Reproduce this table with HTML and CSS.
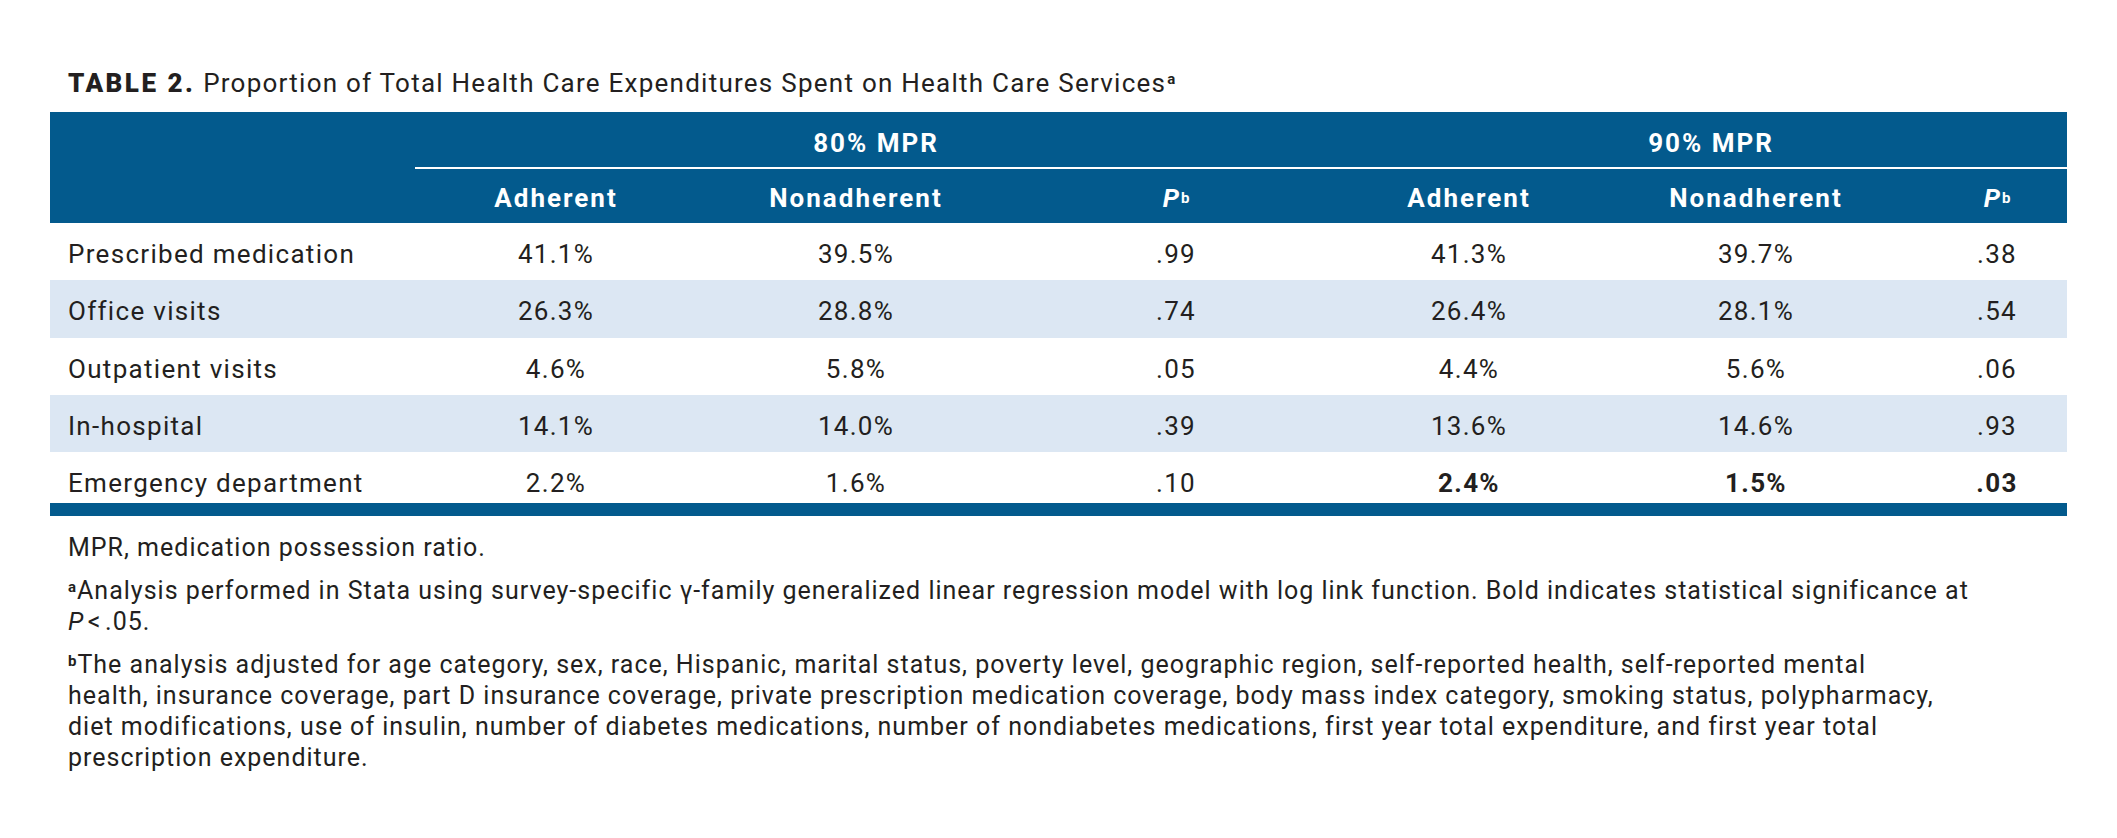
FILE: index.html
```html
<!DOCTYPE html>
<html lang="en">
<head>
<meta charset="utf-8">
<title>Table 2</title>
<link rel="stylesheet" href="styles.css">
</head>
<body>
<div class="page">
  <h1 class="title"><span class="label">TABLE 2.</span> Proportion of Total Health Care Expenditures Spent on Health Care Services<sup class="mark">a</sup></h1>

  <div class="table">
    <div class="head">
      <div class="hrow hrow-top">
        <div class="hcell blank"></div>
        <div class="hcell group g80">80% MPR</div>
        <div class="hcell group g90">90% MPR</div>
      </div>
      <div class="hrow hrow-sub">
        <div class="hcell blank"></div>
        <div class="hcell">Adherent</div>
        <div class="hcell">Nonadherent</div>
        <div class="hcell"><i>P</i><sup class="mark">b</sup></div>
        <div class="hcell">Adherent</div>
        <div class="hcell">Nonadherent</div>
        <div class="hcell last-col"><i>P</i><sup class="mark">b</sup></div>
      </div>
    </div>

    <div class="row">
      <div class="cell name">Prescribed medication</div>
      <div class="cell">41.1%</div>
      <div class="cell">39.5%</div>
      <div class="cell">.99</div>
      <div class="cell">41.3%</div>
      <div class="cell">39.7%</div>
      <div class="cell last-col">.38</div>
    </div>
    <div class="row alt tall">
      <div class="cell name">Office visits</div>
      <div class="cell">26.3%</div>
      <div class="cell">28.8%</div>
      <div class="cell">.74</div>
      <div class="cell">26.4%</div>
      <div class="cell">28.1%</div>
      <div class="cell last-col">.54</div>
    </div>
    <div class="row">
      <div class="cell name">Outpatient visits</div>
      <div class="cell">4.6%</div>
      <div class="cell">5.8%</div>
      <div class="cell">.05</div>
      <div class="cell">4.4%</div>
      <div class="cell">5.6%</div>
      <div class="cell last-col">.06</div>
    </div>
    <div class="row alt">
      <div class="cell name">In-hospital</div>
      <div class="cell">14.1%</div>
      <div class="cell">14.0%</div>
      <div class="cell">.39</div>
      <div class="cell">13.6%</div>
      <div class="cell">14.6%</div>
      <div class="cell last-col">.93</div>
    </div>
    <div class="row row-last">
      <div class="cell name">Emergency department</div>
      <div class="cell">2.2%</div>
      <div class="cell">1.6%</div>
      <div class="cell">.10</div>
      <div class="cell strong">2.4%</div>
      <div class="cell strong">1.5%</div>
      <div class="cell last-col strong">.03</div>
    </div>
    <div class="bottom-rule"></div>
  </div>

  <div class="notes">
    <p class="note">MPR, medication possession ratio.</p>
    <p class="note"><sup class="fn">a</sup>Analysis performed in Stata using survey-specific γ-family generalized linear regression model with log link function. Bold indicates statistical significance at<br><i>P</i>&#8202;&lt;&#8202;.05.</p>
    <p class="note"><sup class="fn">b</sup>The analysis adjusted for age category, sex, race, Hispanic, marital status, poverty level, geographic region, self-reported health, self-reported mental<br>health, insurance coverage, part D insurance coverage, private prescription medication coverage, body mass index category, smoking status, polypharmacy,<br>diet modifications, use of insulin, number of diabetes medications, number of nondiabetes medications, first year total expenditure, and first year total<br>prescription expenditure.</p>
  </div>
</div>
</body>
</html>
```

FILE: styles.css
```css
* {
  box-sizing: border-box;
}

body {
  margin: 0;
  background: #ffffff;
  color: #231f20;
  font-family: Roboto, "Liberation Sans", Arial, sans-serif;
}

.page {
  width: 2117px;
  padding: 68px 0 0 50px;
}

.title {
  margin: 0 0 13px 18px;
  font-size: 26px;
  line-height: 31px;
  font-weight: 400;
  letter-spacing: 1.25px;
  white-space: nowrap;
}

.title .label {
  font-weight: 900;
  letter-spacing: 2.5px;
}

.title .mark {
  font-size: 15px;
  font-weight: 700;
  line-height: 0;
  vertical-align: 0.55em;
  letter-spacing: 0;
  margin-left: 1px;
}

.table {
  width: 2017px;
}

.head {
  background: #035a8d;
  color: #ffffff;
  font-weight: 700;
  font-size: 26px;
  letter-spacing: 2px;
}

.hrow,
.row {
  display: grid;
  grid-template-columns: 365px 282px 318px 322px 264px 310px 156px;
}

.hrow-top {
  height: 57px;
}

.hrow-sub {
  height: 54px;
}

.hcell {
  display: flex;
  align-items: center;
  justify-content: center;
  padding-top: 3px;
  white-space: nowrap;
}

.hrow-top .hcell {
  padding-top: 6px;
}

.hrow-top .blank {
  grid-column: 1;
}

.group {
  border-bottom: 2px solid #ffffff;
}

.g80 {
  grid-column: 2 / 5;
}

.g90 {
  grid-column: 5 / 8;
  padding-left: 18px;
}

.hcell i {
  font-style: italic;
  letter-spacing: 0;
}

.hcell .mark {
  font-size: 15px;
  line-height: 0;
  vertical-align: 0.6em;
  margin-left: 2px;
  letter-spacing: 0;
}

.last-col {
  padding-left: 16px;
}

.row {
  height: 57px;
  font-size: 26px;
  letter-spacing: 1.3px;
}

.row.tall {
  height: 58px;
}

.row.alt {
  background: #dce7f3;
}

.row-last {
  height: 51px;
}

.cell {
  display: flex;
  align-items: center;
  justify-content: center;
  padding-top: 4px;
  white-space: nowrap;
}

.row-last .cell {
  padding-top: 11px;
}

.cell.name {
  justify-content: flex-start;
  padding-left: 18px;
}

.cell.strong {
  font-weight: 700;
}

.bottom-rule {
  height: 13px;
  background: #035a8d;
}

.notes {
  padding: 16px 0 0 18px;
}

.note {
  margin: 0 0 12px 0;
  font-size: 25px;
  line-height: 31px;
  letter-spacing: 1px;
  white-space: nowrap;
}

.note .fn {
  font-size: 15px;
  font-weight: 700;
  line-height: 0;
  vertical-align: 0.5em;
  letter-spacing: 0;
  margin-right: 1px;
}

.note i {
  font-style: italic;
}
```
